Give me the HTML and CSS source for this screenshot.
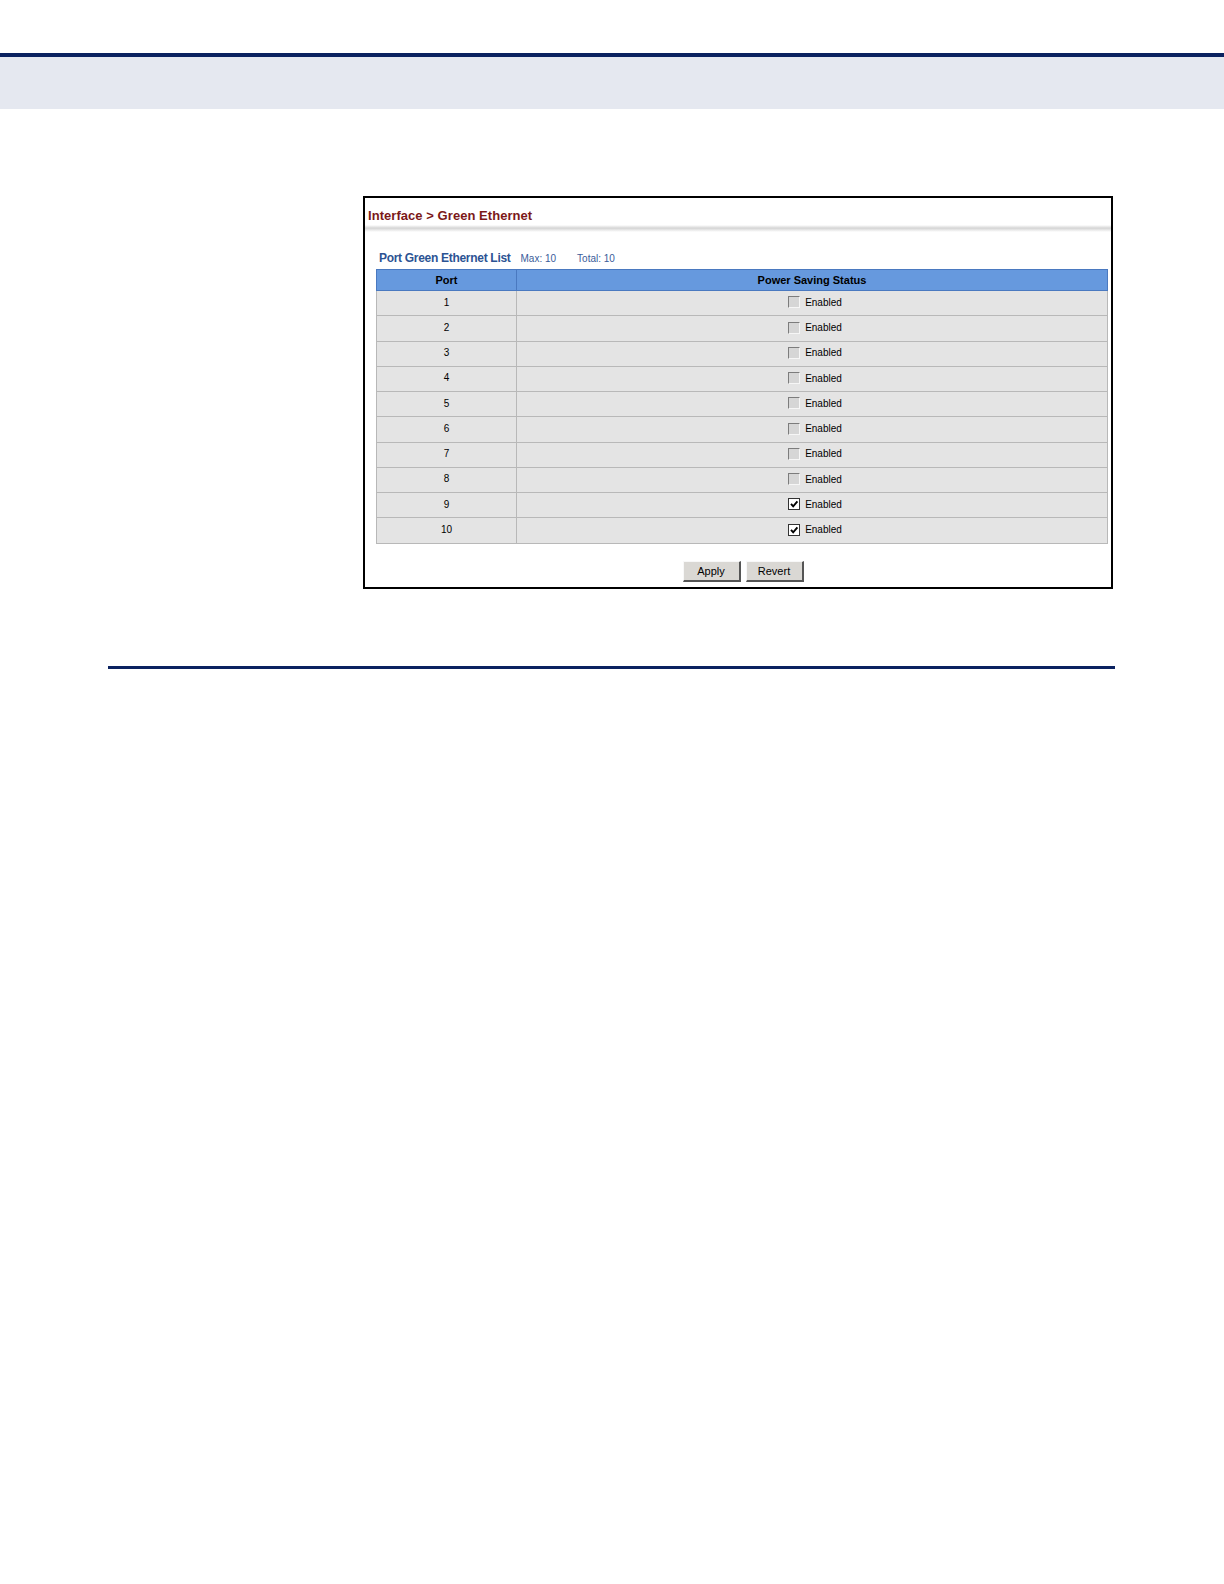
FILE: index.html
```html
<!DOCTYPE html>
<html>
<head>
<meta charset="utf-8">
<link rel="stylesheet" href="styles.css">
</head>
<body>
<div class="topbar"></div>
<div class="band"></div>
<div class="content">
  <div class="shot">
    <div class="title">Interface &gt; Green Ethernet</div>
    <div class="rule"></div>
    <div class="listhead">
      <span class="listname">Port Green Ethernet List</span>
      <span class="meta">Max: 10</span>
      <span class="meta">Total: 10</span>
    </div>
    <table class="grid">
      <thead>
        <tr><th class="c1">Port</th><th>Power Saving Status</th></tr>
      </thead>
      <tbody>
        <tr><td class="c1">1</td><td><span class="chk"></span><span class="lbl">Enabled</span></td></tr>
        <tr><td class="c1">2</td><td><span class="chk"></span><span class="lbl">Enabled</span></td></tr>
        <tr><td class="c1">3</td><td><span class="chk"></span><span class="lbl">Enabled</span></td></tr>
        <tr><td class="c1">4</td><td><span class="chk"></span><span class="lbl">Enabled</span></td></tr>
        <tr><td class="c1">5</td><td><span class="chk"></span><span class="lbl">Enabled</span></td></tr>
        <tr><td class="c1">6</td><td><span class="chk"></span><span class="lbl">Enabled</span></td></tr>
        <tr><td class="c1">7</td><td><span class="chk"></span><span class="lbl">Enabled</span></td></tr>
        <tr><td class="c1">8</td><td><span class="chk"></span><span class="lbl">Enabled</span></td></tr>
        <tr><td class="c1">9</td><td><span class="chk on"><svg viewBox="0 0 10 10" width="10" height="10"><path d="M2 4.8 L4.2 7.4 L8.4 2.4" fill="none" stroke="#000" stroke-width="1.9"/></svg></span><span class="lbl">Enabled</span></td></tr>
        <tr><td class="c1">10</td><td><span class="chk on"><svg viewBox="0 0 10 10" width="10" height="10"><path d="M2 4.8 L4.2 7.4 L8.4 2.4" fill="none" stroke="#000" stroke-width="1.9"/></svg></span><span class="lbl">Enabled</span></td></tr>
      </tbody>
    </table>
    <div class="buttons">
      <span class="btn">Apply</span>
      <span class="btn">Revert</span>
    </div>
  </div>
</div>
<div class="bottomline"></div>
</body>
</html>
```
FILE: styles.css
```css
html, body {
  margin: 0;
  padding: 0;
  background: #ffffff;
  font-family: "Liberation Sans", Arial, sans-serif;
}
.topbar {
  margin-top: 53px;
  height: 4px;
  background: #0b2260;
}
.band {
  height: 52px;
  background: #e5e8f0;
}
.content {
  padding: 87px 0 0 363px;
}
.shot {
  width: 746px;
  border: 2px solid #000;
  padding-bottom: 5px;
}
.title {
  padding: 10px 0 0 3px;
  height: 16px;
  font-size: 13px;
  font-weight: bold;
  color: #7b1818;
  line-height: 16px;
  letter-spacing: 0.05px;
}
.rule {
  margin-top: 1px;
  height: 7px;
  background: linear-gradient(#ffffff, #d4d4d4 45%, #e8e8e8 70%, #ffffff);
}
.listhead {
  margin: 18px 0 0 14px;
  height: 16px;
  line-height: 16px;
  display: flex;
  align-items: baseline;
}
.listname {
  font-size: 12px;
  font-weight: bold;
  color: #2c5393;
  letter-spacing: -0.3px;
}
.meta {
  font-size: 10px;
  color: #3a5c9a;
  margin-left: 10px;
}
.meta + .meta {
  margin-left: 21px;
}
.grid {
  margin: 3px 0 0 11px;
  width: 732px;
  border-collapse: collapse;
  font-size: 10px;
}
.grid th {
  height: 20px;
  padding: 0;
  background: #6699de;
  border: 1px solid #4a79c0;
  color: #000;
  font-size: 11px;
  font-weight: bold;
  text-align: center;
}
.grid td {
  height: 22.25px;
  padding: 0 0 2px 0;
  background: #e4e4e4;
  border: 1px solid #b8b8b8;
  text-align: center;
  color: #000;
}
.grid .c1 {
  width: 139px;
}
.chk {
  display: inline-block;
  box-sizing: border-box;
  width: 12px;
  height: 12px;
  border: 1px solid #7c7c7c;
  border-right-color: #f6f6f6;
  border-bottom-color: #f6f6f6;
  background: #d6d6d6;
  vertical-align: middle;
  margin: 0 5px 0 6px;
  position: relative;
  top: 0;
}
.chk.on {
  background: #fff;
  border: 1px solid #333;
}
.chk svg {
  display: block;
}
.lbl {
  vertical-align: middle;
}
.buttons {
  margin-top: 17px;
  display: flex;
  justify-content: center;
  gap: 5px;
  padding-left: 10px;
}
.btn {
  display: inline-block;
  box-sizing: border-box;
  height: 21px;
  line-height: 19px;
  width: 58px;
  text-align: center;
  font-size: 11px;
  background: #dad8d4;
  border: 1px solid #f8f8f8;
  border-right: 2px solid #555;
  border-bottom: 2px solid #555;
  color: #000;
}
.bottomline {
  margin: 77px 0 0 108px;
  width: 1007px;
  height: 3px;
  background: #0b2260;
}
```
